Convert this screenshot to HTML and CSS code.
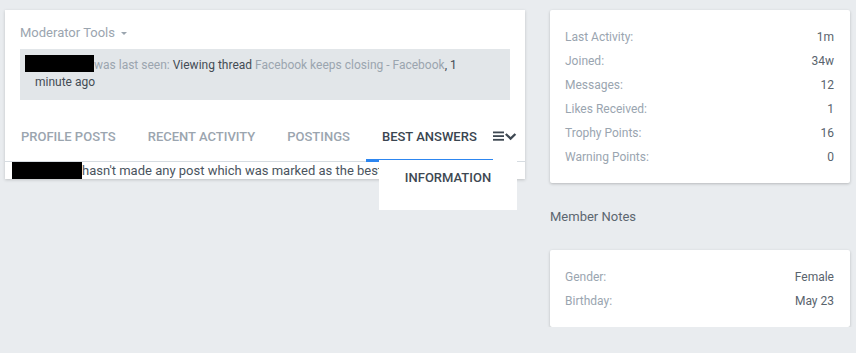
FILE: index.html
```html
<!DOCTYPE html>
<html>
<head>
    <title>Member Profile</title>
    <link rel="stylesheet" href="styles.css">
</head>
<body>
    <div class="page">
        <div class="main-col">
            <div class="profile-card">
                <div class="mod-tools">Moderator Tools <span class="caret"></span></div>
                <div class="last-seen">
                    <span class="redacted redacted-name"></span><span class="muted">was last seen:</span> Viewing thread <a href="#" class="muted">Facebook keeps closing - Facebook</a>, 1 minute ago
                </div>

                <div class="tabs">
                    <a href="#" class="tab">Profile Posts</a>
                    <a href="#" class="tab">Recent Activity</a>
                    <a href="#" class="tab">Postings</a>
                    <a href="#" class="tab active">Best Answers</a>
                    <a href="#" class="tab-more">
                        <svg width="24" height="10" viewBox="0 0 24 10">
                            <rect x="0" y="0.5" width="11" height="1.8" fill="#3e4852"/>
                            <rect x="0" y="4.2" width="11" height="1.8" fill="#3e4852"/>
                            <rect x="0" y="7.9" width="11" height="1.8" fill="#3e4852"/>
                            <polyline points="12.8,3 17.6,7.6 22.4,3" fill="none" stroke="#3e4852" stroke-width="2.3"/>
                        </svg>
                    </a>
                </div>

                <div class="tab-content">
                    <span class="redacted redacted-small"></span>hasn't made any post which was marked as the best answer yet.
                </div>
            </div>

            <div class="tab-menu">
                <a href="#">Information</a>
            </div>
        </div>

        <div class="side-col">
            <div class="info-card">
                <dl class="pair"><dt>Last Activity:</dt><dd>1m</dd></dl>
                <dl class="pair"><dt>Joined:</dt><dd>34w</dd></dl>
                <dl class="pair"><dt>Messages:</dt><dd>12</dd></dl>
                <dl class="pair"><dt>Likes Received:</dt><dd>1</dd></dl>
                <dl class="pair"><dt>Trophy Points:</dt><dd>16</dd></dl>
                <dl class="pair"><dt>Warning Points:</dt><dd>0</dd></dl>
            </div>

            <h3 class="side-title">Member Notes</h3>

            <div class="info-card">
                <dl class="pair"><dt>Gender:</dt><dd>Female</dd></dl>
                <dl class="pair"><dt>Birthday:</dt><dd>May 23</dd></dl>
            </div>
        </div>
    </div>
</body>
</html>
```

FILE: styles.css
```css
body {
    font-family: Roboto, 'Liberation Sans', sans-serif;
    background-color: #e9ecef;
    margin: 0;
    color: #4a545e;
}

a {
    text-decoration: none;
}

.page {
    display: flex;
    align-items: flex-start;
    gap: 25px;
    padding: 10px 6px 0 5px;
}

.main-col {
    position: relative;
    width: 520px;
}

.profile-card {
    background-color: white;
    box-shadow: 0 1px 3px rgba(0,0,0,0.18);
    padding-top: 14px;
}

.mod-tools {
    font-size: 13px;
    color: #9ba5af;
    margin: 0 15px 7px 15px;
    line-height: 18px;
}

.caret {
    display: inline-block;
    width: 0;
    height: 0;
    border-left: 3px solid transparent;
    border-right: 3px solid transparent;
    border-top: 3px solid #9ba5af;
    vertical-align: middle;
    margin-left: 3px;
}

.last-seen {
    background-color: #e2e6e9;
    margin: 0 15px;
    padding: 8px 15px 9px 15px;
    font-size: 12px;
    line-height: 17px;
    color: #444c55;
}

.muted {
    color: #9ba5af;
}

.redacted {
    display: inline-block;
    background-color: black;
    vertical-align: top;
}

/* name blocked out in the screenshot */
.redacted-name {
    position: relative;
    top: -2px;
    width: 69px;
    height: 17px;
    margin-left: -10px;
}

.redacted-small {
    width: 70px;
    height: 17px;
}

.tabs {
    display: flex;
    align-items: center;
    margin-top: 11px;
    height: 50px;
    border-bottom: 1px solid #d6dce1;
}

.tab {
    position: relative;
    height: 100%;
    display: flex;
    align-items: center;
    padding: 0 16px;
    font-size: 13px;
    font-weight: 500;
    white-space: nowrap;
    text-transform: uppercase;
    color: #9ba5af;
}

.tab.active {
    color: #3a4550;
}

.tab.active::after {
    content: "";
    position: absolute;
    left: 0;
    right: 0;
    bottom: -1px;
    height: 3px;
    background-color: #2d86f0;
}

.tab-more {
    display: flex;
    align-items: center;
}

.tab-content {
    height: 17px;
    overflow: hidden;
    white-space: nowrap;
    padding-left: 7px;
    font-size: 13px;
    line-height: 17px;
    color: #4a545e;
}

.tab-menu {
    position: absolute;
    left: 374px;
    top: 150px;
    width: 138px;
    height: 50px;
    background-color: white;
    text-align: center;
}

.tab-menu a {
    display: block;
    padding-top: 10px;
    font-size: 13px;
    font-weight: 500;
    text-transform: uppercase;
    color: #3e4852;
}

.side-col {
    width: 300px;
}

.info-card {
    background-color: white;
    border-radius: 2px;
    box-shadow: 0 1px 3px rgba(0,0,0,0.22);
    padding: 15px 16px 14px 15px;
}

.pair {
    display: flex;
    justify-content: space-between;
    margin: 0;
    font-size: 12px;
    line-height: 24px;
}

.pair dt {
    color: #9aa5b0;
}

.pair dd {
    margin: 0;
    color: #59636d;
}

.side-title {
    font-size: 13px;
    font-weight: normal;
    color: #5c6670;
    line-height: 20px;
    margin: 24px 0 23px 0;
}
```
